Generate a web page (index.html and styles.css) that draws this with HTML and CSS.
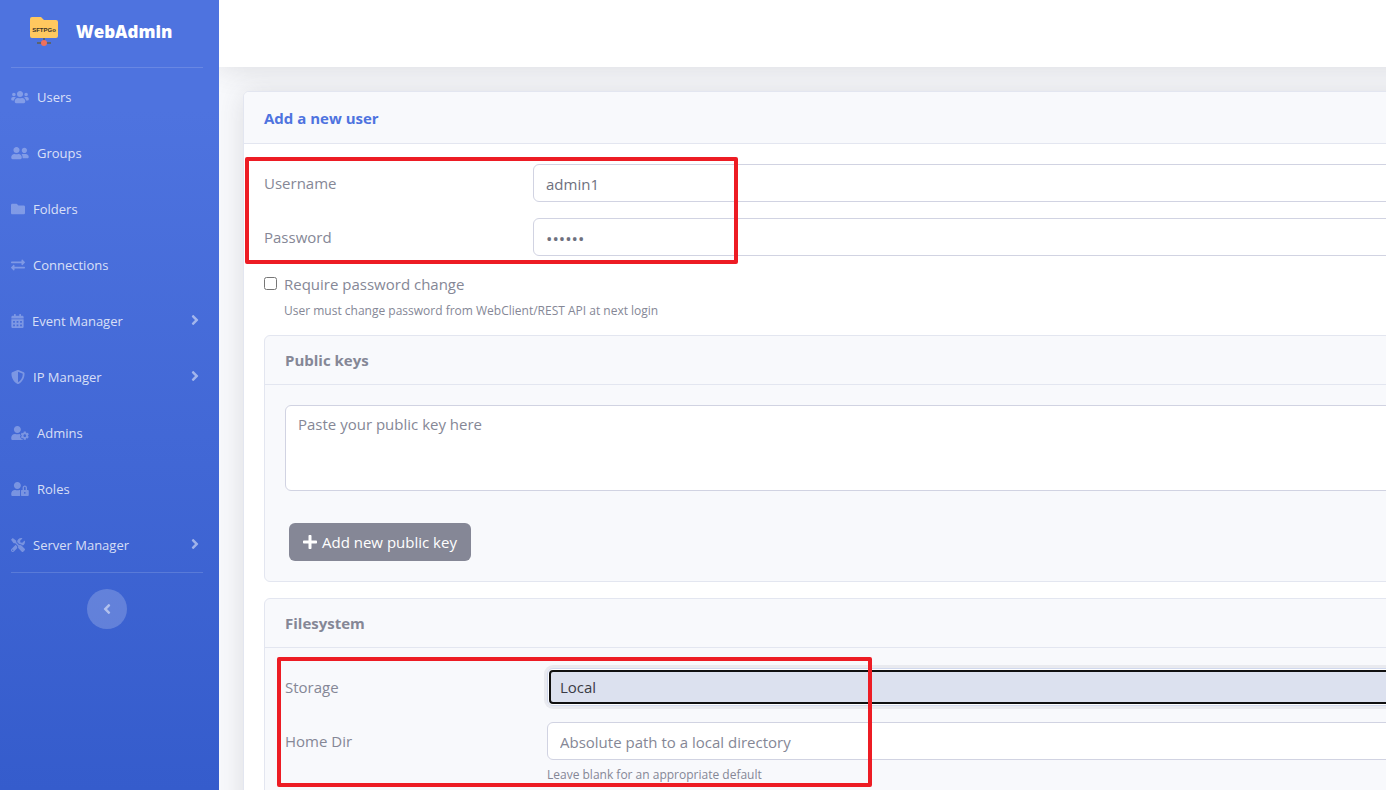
FILE: index.html
```html
<!DOCTYPE html>
<html lang="en">
<head>
<meta charset="utf-8">
<title>Add a new user - WebAdmin</title>
<link rel="stylesheet" href="styles.css">
</head>
<body>
<div class="page">
  <nav class="sidebar" aria-label="Main">
    <a class="brand" href="#">
      <svg class="brand-logo" viewBox="0 0 28 30" aria-hidden="true">
        <path fill="#5b6470" d="M13 21h2v3h-2zM7 25h14v2H7z"/>
        <path fill="#ffc85f" d="M2 0h9l3 3h12a2 2 0 0 1 2 2v14a2 2 0 0 1-2 2H2a2 2 0 0 1-2-2V2a2 2 0 0 1 2-2z"/>
        <circle cx="14" cy="26" r="3" fill="#f1705c"/>
        <text class="logo-text" x="14" y="15" text-anchor="middle">SFTPGo</text>
      </svg>
      <span>WebAdmin</span>
    </a>
    <hr class="divider">
    <ul class="menu">
      <li><a class="item" href="#"><svg class="icon icon-wide" viewBox="0 0 640 512" aria-hidden="true"><path d="M96 224c35.300 0 64-28.700 64-64s-28.700-64-64-64-64 28.700-64 64 28.700 64 64 64zm448 0c35.300 0 64-28.700 64-64s-28.700-64-64-64-64 28.700-64 64 28.700 64 64 64zm32 32h-64c-17.600 0-33.500 7.100-45.100 18.600 40.300 22.100 68.900 62 75.100 109.400h66c17.700 0 32-14.300 32-32v-32c0-35.300-28.700-64-64-64zm-256 0c61.900 0 112-50.100 112-112S381.900 32 320 32 208 82.100 208 144s50.100 112 112 112zm76.800 32h-8.300c-20.800 10-43.900 16-68.500 16s-47.600-6-68.500-16h-8.300C179.600 288 128 339.600 128 403.200V432c0 26.500 21.500 48 48 48h288c26.500 0 48-21.500 48-48v-28.800c0-63.600-51.600-115.200-115.200-115.200zm-223.700-13.400C161.500 263.100 145.600 256 128 256H64c-35.300 0-64 28.700-64 64v32c0 17.700 14.300 32 32 32h65.900c6.300-47.400 34.900-87.300 75.200-109.400z"/></svg><span>Users</span></a></li>
      <li><a class="item" href="#"><svg class="icon icon-wide" viewBox="0 0 640 512" aria-hidden="true"><path d="M192 256c61.900 0 112-50.100 112-112S253.900 32 192 32 80 82.100 80 144s50.100 112 112 112zm76.800 32h-8.300c-20.800 10-43.900 16-68.500 16s-47.600-6-68.500-16h-8.300C51.600 288 0 339.600 0 403.200V432c0 26.500 21.500 48 48 48h288c26.500 0 48-21.500 48-48v-28.800c0-63.600-51.600-115.200-115.200-115.200zM480 256c53 0 96-43 96-96s-43-96-96-96-96 43-96 96 43 96 96 96zm48 32h-3.800c-13.900 4.800-28.600 8-44.200 8s-30.300-3.200-44.200-8H432c-20.400 0-39.200 5.900-55.700 15.400 24.400 26.300 39.700 61.200 39.700 99.800v38.400c0 2.200-.5 4.300-.6 6.400H592c26.500 0 48-21.500 48-48 0-61.900-50.100-112-112-112z"/></svg><span>Groups</span></a></li>
      <li><a class="item" href="#"><svg class="icon" viewBox="0 0 512 512" aria-hidden="true"><path d="M464 128H272l-64-64H48C21.500 64 0 85.500 0 112v288c0 26.500 21.500 48 48 48h416c26.500 0 48-21.500 48-48V176c0-26.500-21.500-48-48-48z"/></svg><span>Folders</span></a></li>
      <li><a class="item" href="#"><svg class="icon" viewBox="0 0 512 512" aria-hidden="true"><path d="M0 168v-16c0-13.300 10.700-24 24-24h360V80c0-21.400 25.900-32 41-17l80 80c9.400 9.400 9.400 24.600 0 34l-80 80c-15 15-41 4.500-41-17v-48H24c-13.300 0-24-10.700-24-24zm488 152H128v-48c0-21.300-25.900-32-41-17l-80 80c-9.400 9.400-9.400 24.600 0 34l80 80c15 15 41 4.400 41-17v-48h360c13.300 0 24-10.700 24-24v-16c0-13.300-10.700-24-24-24z"/></svg><span>Connections</span></a></li>
      <li><a class="item" href="#"><svg class="icon icon-narrow" viewBox="0 0 448 512" aria-hidden="true"><path fill-rule="evenodd" d="M0 464c0 26.500 21.500 48 48 48h352c26.500 0 48-21.500 48-48V192H0zM64 256h64v64H64zm128 0h64v64h-64zm128 0h64v64h-64zM64 384h64v64H64zm128 0h64v64h-64zm128 0h64v64h-64zM400 64h-48V16c0-8.800-7.200-16-16-16h-32c-8.800 0-16 7.200-16 16v48H160V16c0-8.800-7.200-16-16-16h-32c-8.800 0-16 7.200-16 16v48H48C21.500 64 0 85.500 0 112v48h448v-48c0-26.500-21.500-48-48-48z"/></svg><span>Event Manager</span><svg class="arrow" viewBox="0 0 256 512" aria-hidden="true"><path d="M224 273l-136 136c-9 9-25 9-34 0l-22-23c-10-9-10-24 0-34l96-96-96-96c-10-10-10-25 0-34l22-23c10-9 25-9 34 0l136 136c10 9 10 25 0 34z"/></svg></a></li>
      <li><a class="item" href="#"><svg class="icon" viewBox="0 0 512 512" aria-hidden="true"><path d="M466.500 83.700l-192-80a48 48 0 0 0-37 0l-192 80C27.700 91.100 16 108.600 16 128c0 198.500 114.500 335.700 221.500 380.300 11.800 4.900 25.100 4.900 36.900 0C360.100 472.600 496 349.300 496 128c0-19.400-11.700-36.900-29.500-44.300zM256 446V65l176 74c-3 151-82 261-176 307z"/></svg><span>IP Manager</span><svg class="arrow" viewBox="0 0 256 512" aria-hidden="true"><path d="M224 273l-136 136c-9 9-25 9-34 0l-22-23c-10-9-10-24 0-34l96-96-96-96c-10-10-10-25 0-34l22-23c10-9 25-9 34 0l136 136c10 9 10 25 0 34z"/></svg></a></li>
      <li><a class="item" href="#"><svg class="icon icon-wide" viewBox="0 0 640 512" aria-hidden="true"><path d="M610.500 373.300c2.600-14.100 2.600-28.500 0-42.600l25.800-14.900c3-1.700 4.300-5.200 3.300-8.500-6.700-21.600-18.200-41.200-33.200-57.400-2.300-2.500-6-3.100-9-1.400l-25.800 14.900c-10.900-9.300-23.400-16.500-36.900-21.300v-29.800c0-3.400-2.400-6.400-5.700-7.100-22.300-5-45-4.800-66.200 0-3.300.7-5.700 3.700-5.700 7.100v29.800c-13.500 4.800-26 12-36.900 21.300l-25.800-14.900c-2.900-1.700-6.700-1.100-9 1.400-15 16.200-26.500 35.800-33.200 57.400-1 3.300.4 6.800 3.300 8.500l25.800 14.900c-2.600 14.100-2.600 28.500 0 42.600l-25.800 14.900c-3 1.700-4.300 5.200-3.300 8.500 6.700 21.600 18.200 41.100 33.200 57.400 2.300 2.500 6 3.100 9 1.400l25.800-14.900c10.900 9.300 23.400 16.500 36.900 21.300v29.800c0 3.400 2.400 6.400 5.700 7.100 22.300 5 45 4.800 66.200 0 3.300-.7 5.700-3.700 5.700-7.100v-29.800c13.500-4.800 26-12 36.900-21.300l25.800 14.900c2.900 1.700 6.700 1.100 9-1.400 15-16.200 26.500-35.800 33.200-57.400 1-3.300-.4-6.800-3.300-8.500zM496 400.500c-26.800 0-48.500-21.800-48.500-48.500s21.800-48.500 48.500-48.500 48.500 21.800 48.500 48.500-21.700 48.500-48.500 48.500zM224 256c70.700 0 128-57.300 128-128S294.700 0 224 0 96 57.300 96 128s57.300 128 128 128zM297 288c-22 10-47 16-73 16s-51-6-73-16h-17C60 288 0 348 0 422v42c0 27 22 48 48 48h352c8 0 16-2 23-6-3-5-4-11-4-17v-8l-7-4c-23 12-33 5-49-13-18-20-32-44-40-69-6-18 2-38 18-47l8-4v-9l-8-4c-12-7-19-19-20-32z"/></svg><span>Admins</span></a></li>
      <li><a class="item" href="#"><svg class="icon icon-wide" viewBox="0 0 640 512" aria-hidden="true"><path d="M224 256c70.700 0 128-57.300 128-128S294.700 0 224 0 96 57.300 96 128s57.300 128 128 128zm96 64c0-11 3-21 8-30-5-1-10-2-14-2h-17c-22 10-47 16-73 16s-51-6-73-16h-17C60 288 0 348 0 422v42c0 27 22 48 48 48h281c-5-10-9-20-9-32zM608 288h-32v-80c0-44.100-35.900-80-80-80s-80 35.900-80 80v80h-32c-17.700 0-32 14.300-32 32v160c0 17.700 14.300 32 32 32h224c17.700 0 32-14.300 32-32V320c0-17.700-14.300-32-32-32zM496 432c-17.700 0-32-14.300-32-32s14.300-32 32-32 32 14.300 32 32-14.300 32-32 32zm32-144h-64v-80c0-17.700 14.300-32 32-32s32 14.300 32 32v80z"/></svg><span>Roles</span></a></li>
      <li><a class="item" href="#"><svg class="icon" viewBox="0 0 512 512" aria-hidden="true"><path d="M501.100 395.700L384 278.600c-23.100-23.100-57.600-27.600-85.400-13.900L192 158.100V96L64 0 0 64l96 128h62.100l106.600 106.600c-13.600 27.800-9.200 62.300 13.900 85.400l117.100 117.100c14.600 14.600 38.200 14.600 52.700 0l52.700-52.700c14.500-14.600 14.500-38.200 0-52.700zM331.700 225c28.300 0 54.900 11 74.900 31l19.400 19.400c15.800-6.900 30.800-16.500 43.800-29.500 37.100-37.100 49.700-89.300 37.900-136.700-2.200-9-13.500-12.100-20.100-5.500l-74.400 74.400-67.900-11.300L334 98.900l74.400-74.400c6.600-6.600 3.400-17.900-5.700-20.200-47.400-11.700-99.600.9-136.600 37.900-28.500 28.500-41.900 66.100-41.200 103.600l82.100 82.100c8.100-1.900 16.500-2.900 24.700-2.900zm-103.900 82l-56.700-56.700L18.700 402.800c-25 25-25 65.500 0 90.500s65.500 25 90.500 0l123.600-123.600c-7.600-19.900-9.900-41.600-5-62.700zM64 472c-13.200 0-24-10.800-24-24 0-13.300 10.700-24 24-24s24 10.700 24 24c0 13.200-10.700 24-24 24z"/></svg><span>Server Manager</span><svg class="arrow" viewBox="0 0 256 512" aria-hidden="true"><path d="M224 273l-136 136c-9 9-25 9-34 0l-22-23c-10-9-10-24 0-34l96-96-96-96c-10-10-10-25 0-34l22-23c10-9 25-9 34 0l136 136c10 9 10 25 0 34z"/></svg></a></li>
    </ul>
    <hr class="divider">
    <button class="collapse" type="button" aria-label="Collapse sidebar"><svg class="collapse-arrow" viewBox="0 0 256 512" aria-hidden="true"><path d="M32 239l136-136c9-9 25-9 34 0l22 23c10 9 10 24 0 34l-96 96 96 96c10 10 10 25 0 34l-22 23c-10 9-25 9-34 0L32 273c-10-9-10-25 0-34z"/></svg></button>
  </nav>

  <div class="content">
    <header class="topbar"></header>
    <main class="main">
      <form class="card">
        <h1 class="card-header">Add a new user</h1>
        <div class="card-body">
          <div class="marked">
            <div class="row">
              <label class="label" for="username">Username</label>
              <input class="control" id="username" type="text" value="admin1">
            </div>
            <div class="row">
              <label class="label" for="password">Password</label>
              <input class="control control-password" id="password" type="password" value="secret">
            </div>
            <div class="marker marker-login"></div>
          </div>
          <div class="check">
            <input class="check-box" id="change" type="checkbox" aria-describedby="change-help">
            <label for="change">Require password change</label>
            <small class="help" id="change-help">User must change password from WebClient/REST API at next login</small>
          </div>

          <section class="panel">
            <h2 class="panel-header">Public keys</h2>
            <div class="panel-body">
              <textarea class="control keys" aria-label="Public key" placeholder="Paste your public key here"></textarea>
              <button class="button" type="button"><svg class="plus" viewBox="0 0 448 512" aria-hidden="true"><path d="M416 208H272V64c0-18-14-32-32-32h-32c-18 0-32 14-32 32v144H32c-18 0-32 14-32 32v32c0 18 14 32 32 32h144v144c0 18 14 32 32 32h32c18 0 32-14 32-32V304h144c18 0 32-14 32-32v-32c0-18-14-32-32-32z"/></svg><span>Add new public key</span></button>
            </div>
          </section>

          <section class="panel">
            <h2 class="panel-header">Filesystem</h2>
            <div class="panel-body marked">
              <div class="row row-inner">
                <label class="label" for="storage">Storage</label>
                <div class="select-frame"><select class="select" id="storage"><option>Local</option></select></div>
              </div>
              <div class="row row-inner">
                <label class="label" for="home">Home Dir</label>
                <input class="control" id="home" type="text" placeholder="Absolute path to a local directory" aria-describedby="home-help">
                <small class="help" id="home-help">Leave blank for an appropriate default</small>
              </div>
              <div class="marker marker-storage"></div>
            </div>
          </section>
        </div>
      </form>
    </main>
  </div>
</div>
</body>
</html>
```
FILE: styles.css
```css
* {
  box-sizing: border-box;
}

body {
  margin: 0;
  height: 100vh;
  overflow: hidden;
  background: #f8f9fc;
  color: #858796;
  font-family: "Segoe UI", "Open Sans", "Noto Sans", sans-serif;
  font-size: 15px;
  line-height: 24px;
}

.page {
  display: flex;
  height: 100%;
}

/* Sidebar */
.sidebar {
  flex: none;
  width: 219px;
  background: linear-gradient(180deg, #4e73df 14%, #355ccc 100%);
}

.brand {
  display: flex;
  align-items: center;
  gap: 18px;
  height: 67px;
  padding: 0 0 4px 30px;
  color: #fff;
  font-size: 17px;
  font-weight: 800;
  text-decoration: none;
}

.brand-logo {
  width: 28px;
  height: 30px;
}

.logo-text {
  fill: #3a3226;
  font-family: "Liberation Sans", Arial, sans-serif;
  font-size: 6px;
  font-weight: 700;
}

.divider {
  height: 1px;
  margin: 0 16px 0 11px;
  border: 0;
  background: rgba(255, 255, 255, 0.15);
}

.menu {
  margin: 0;
  padding: 0;
  list-style: none;
}

.item {
  display: flex;
  align-items: center;
  gap: 8px;
  height: 56px;
  padding: 2px 20px 0 11px;
  color: rgba(255, 255, 255, 0.8);
  font-size: 13px;
  text-decoration: none;
}

.icon {
  width: 14px;
  height: 14px;
  fill: rgba(255, 255, 255, 0.3);
}

.icon-wide {
  width: 18px;
}

.icon-narrow {
  width: 13px;
}

.arrow {
  width: 8px;
  height: 16px;
  margin: 0 0 2px auto;
  fill: rgba(255, 255, 255, 0.5);
}

.collapse {
  display: flex;
  align-items: center;
  justify-content: center;
  width: 40px;
  height: 40px;
  margin: 16px 0 0 87px;
  padding: 0;
  border: 0;
  border-radius: 50%;
  background: rgba(255, 255, 255, 0.2);
}

.collapse-arrow {
  width: 8px;
  height: 16px;
  fill: rgba(255, 255, 255, 0.5);
}

/* Content area */
.content {
  flex: 1;
  min-width: 0;
  overflow: hidden;
}

.topbar {
  height: 67px;
  margin-right: -48px;
  background: #fff;
  box-shadow: 0 2px 28px rgba(58, 59, 69, 0.15);
}

.main {
  padding: 24px 0 0 24px;
}

.card {
  margin-right: -48px;
  border: 1px solid #e3e6f0;
  border-radius: 6px;
  background: #fff;
  box-shadow: 0 2px 28px rgba(58, 59, 69, 0.15);
}

.card-header {
  margin: 0;
  padding: 14px 20px 13px;
  border-bottom: 1px solid #e3e6f0;
  border-radius: 5px 5px 0 0;
  background: #f8f9fc;
  color: #4e73df;
  font-size: 15px;
  font-weight: 700;
}

.card-body {
  padding: 20px;
}

.marked {
  position: relative;
}

.row {
  display: grid;
  grid-template-columns: 269px 1fr;
  margin-bottom: 16px;
}

.row-inner {
  grid-template-columns: 262px 1fr;
}

.label {
  padding-top: 7px;
}

.control {
  width: 100%;
  height: 38px;
  padding: 8px 12px 6px;
  border: 1px solid #d1d3e2;
  border-radius: 6px;
  background: #fff;
  color: #6e707e;
  font: inherit;
}

.control::placeholder {
  color: #858796;
  opacity: 1;
}

.control-password {
  font-size: 17px;
}

.check {
  display: grid;
  grid-template-columns: 20px 1fr;
  margin-bottom: 14px;
}

.check-box {
  width: 13px;
  height: 13px;
  margin: 5px 0 0;
}

.help {
  grid-column: 2;
  padding-top: 5px;
  font-size: 12px;
  line-height: 20px;
}

.panel {
  margin-bottom: 16px;
  border: 1px solid #e3e6f0;
  border-radius: 6px;
  background: #f8f9fc;
}

.panel-header {
  margin: 0;
  padding: 12px 20px;
  border-bottom: 1px solid #e3e6f0;
  font-size: 15px;
  font-weight: 700;
}

.panel-body {
  padding: 20px;
}

.keys {
  display: block;
  height: 86px;
  padding: 6px 12px;
  resize: none;
}

.button {
  display: flex;
  align-items: center;
  gap: 5px;
  height: 38px;
  margin: 32px 0 0 4px;
  padding: 0 14px;
  border: 0;
  border-radius: 6px;
  background: #858796;
  color: #fff;
  font: inherit;
}

.plus {
  width: 14px;
  height: 16px;
  fill: #fff;
}

/* Focused select: outer glow, thin frame, dark inner outline */
.select-frame {
  height: 38px;
  padding: 1px;
  border: 1px solid #d1d9ee;
  border-radius: 6px;
  background: #fff;
  box-shadow: 0 0 0 3px #e9eaef;
}

.select {
  display: block;
  width: 100%;
  height: 34px;
  padding: 0 9px;
  border: 2px solid #101010;
  border-radius: 4px;
  appearance: none;
  background: #dce1ef;
  color: #3a3b45;
  font: inherit;
}

/* Highlight boxes drawn over the form */
.marker {
  position: absolute;
  border: 4px solid #ed1c24;
  border-radius: 2px;
  pointer-events: none;
}

.marker-login {
  top: -7px;
  left: -19px;
  width: 493px;
  height: 107px;
}

.marker-storage {
  top: 9px;
  left: 12px;
  width: 595px;
  height: 130px;
}
```
